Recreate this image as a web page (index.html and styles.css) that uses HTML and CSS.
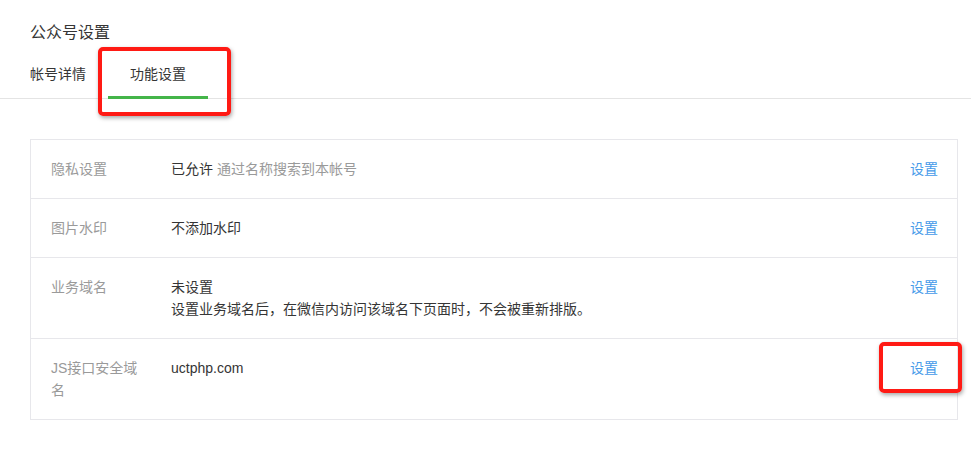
FILE: index.html
```html
<!DOCTYPE html>
<html lang="zh-CN">
<head>
    <meta charset="UTF-8">
    <title>公众号设置</title>
    <link rel="stylesheet" href="styles.css">
</head>
<body>

    <header class="page-head">
        <h1>公众号设置</h1>
        <nav class="tabs">
            <a class="tab">帐号详情</a>
            <a class="tab active">功能设置</a>
        </nav>
    </header>

    <div class="container">
        <div class="setting-table">
            <div class="setting-row">
                <div class="label">隐私设置</div>
                <div class="value">已允许 <span class="tips">通过名称搜索到本帐号</span></div>
                <a class="action">设置</a>
            </div>
            <div class="setting-row">
                <div class="label">图片水印</div>
                <div class="value">不添加水印</div>
                <a class="action">设置</a>
            </div>
            <div class="setting-row">
                <div class="label">业务域名</div>
                <div class="value">未设置<br>设置业务域名后，在微信内访问该域名下页面时，不会被重新排版。</div>
                <a class="action">设置</a>
            </div>
            <div class="setting-row">
                <div class="label">JS接口安全域名</div>
                <div class="value">uctphp.com</div>
                <a class="action">设置</a>
            </div>
        </div>
    </div>

    <!-- annotation boxes -->
    <div class="mark mark-tab"></div>
    <div class="mark mark-action"></div>

</body>
</html>
```

FILE: styles.css
```css
body {
    font-family: "Liberation Sans", "Noto Sans CJK SC", sans-serif;
    margin: 0;
    padding: 0;
    background-color: #fff;
    color: #353535;
    font-size: 14px;
    position: relative;
}

.page-head {
    border-bottom: 1px solid #e4e4e4;
}

.page-head h1 {
    margin: 0;
    padding: 22px 30px 0;
    font-size: 16px;
    font-weight: normal;
    line-height: 22px;
    color: #353535;
}

.tabs {
    display: flex;
    padding: 0 0 0 30px;
    margin-top: 20px;
}

.tab {
    font-size: 14px;
    line-height: 20px;
    padding: 0 0 14px;
    color: #353535;
}

.tab.active {
    margin-left: 22px;
    padding: 0 22px 12px;
    border-bottom: 3px solid #44b549;
    margin-bottom: -1px;
}

.container {
    padding: 40px 13px 0 30px;
}

.setting-table {
    border: 1px solid #e7e7eb;
    border-top: none;
}

.setting-row {
    display: flex;
    border-top: 1px solid #e7e7eb;
    padding: 18px 19px 18px 20px;
    line-height: 22px;
}

.label {
    width: 92px;
    color: #9a9a9a;
    margin-right: 28px;
}

.value {
    flex: 1;
    color: #353535;
}

.tips {
    color: #9a9a9a;
}

.action {
    color: #459ae9;
}

.mark {
    position: absolute;
    border: 4px solid #ff1a14;
    border-radius: 5px;
    box-shadow: 1px 2px 4px rgba(0, 0, 0, 0.35);
    box-sizing: border-box;
}

.mark-tab {
    left: 98px;
    top: 47px;
    width: 133px;
    height: 69px;
}

.mark-action {
    left: 879px;
    top: 342px;
    width: 83px;
    height: 51px;
}
```
